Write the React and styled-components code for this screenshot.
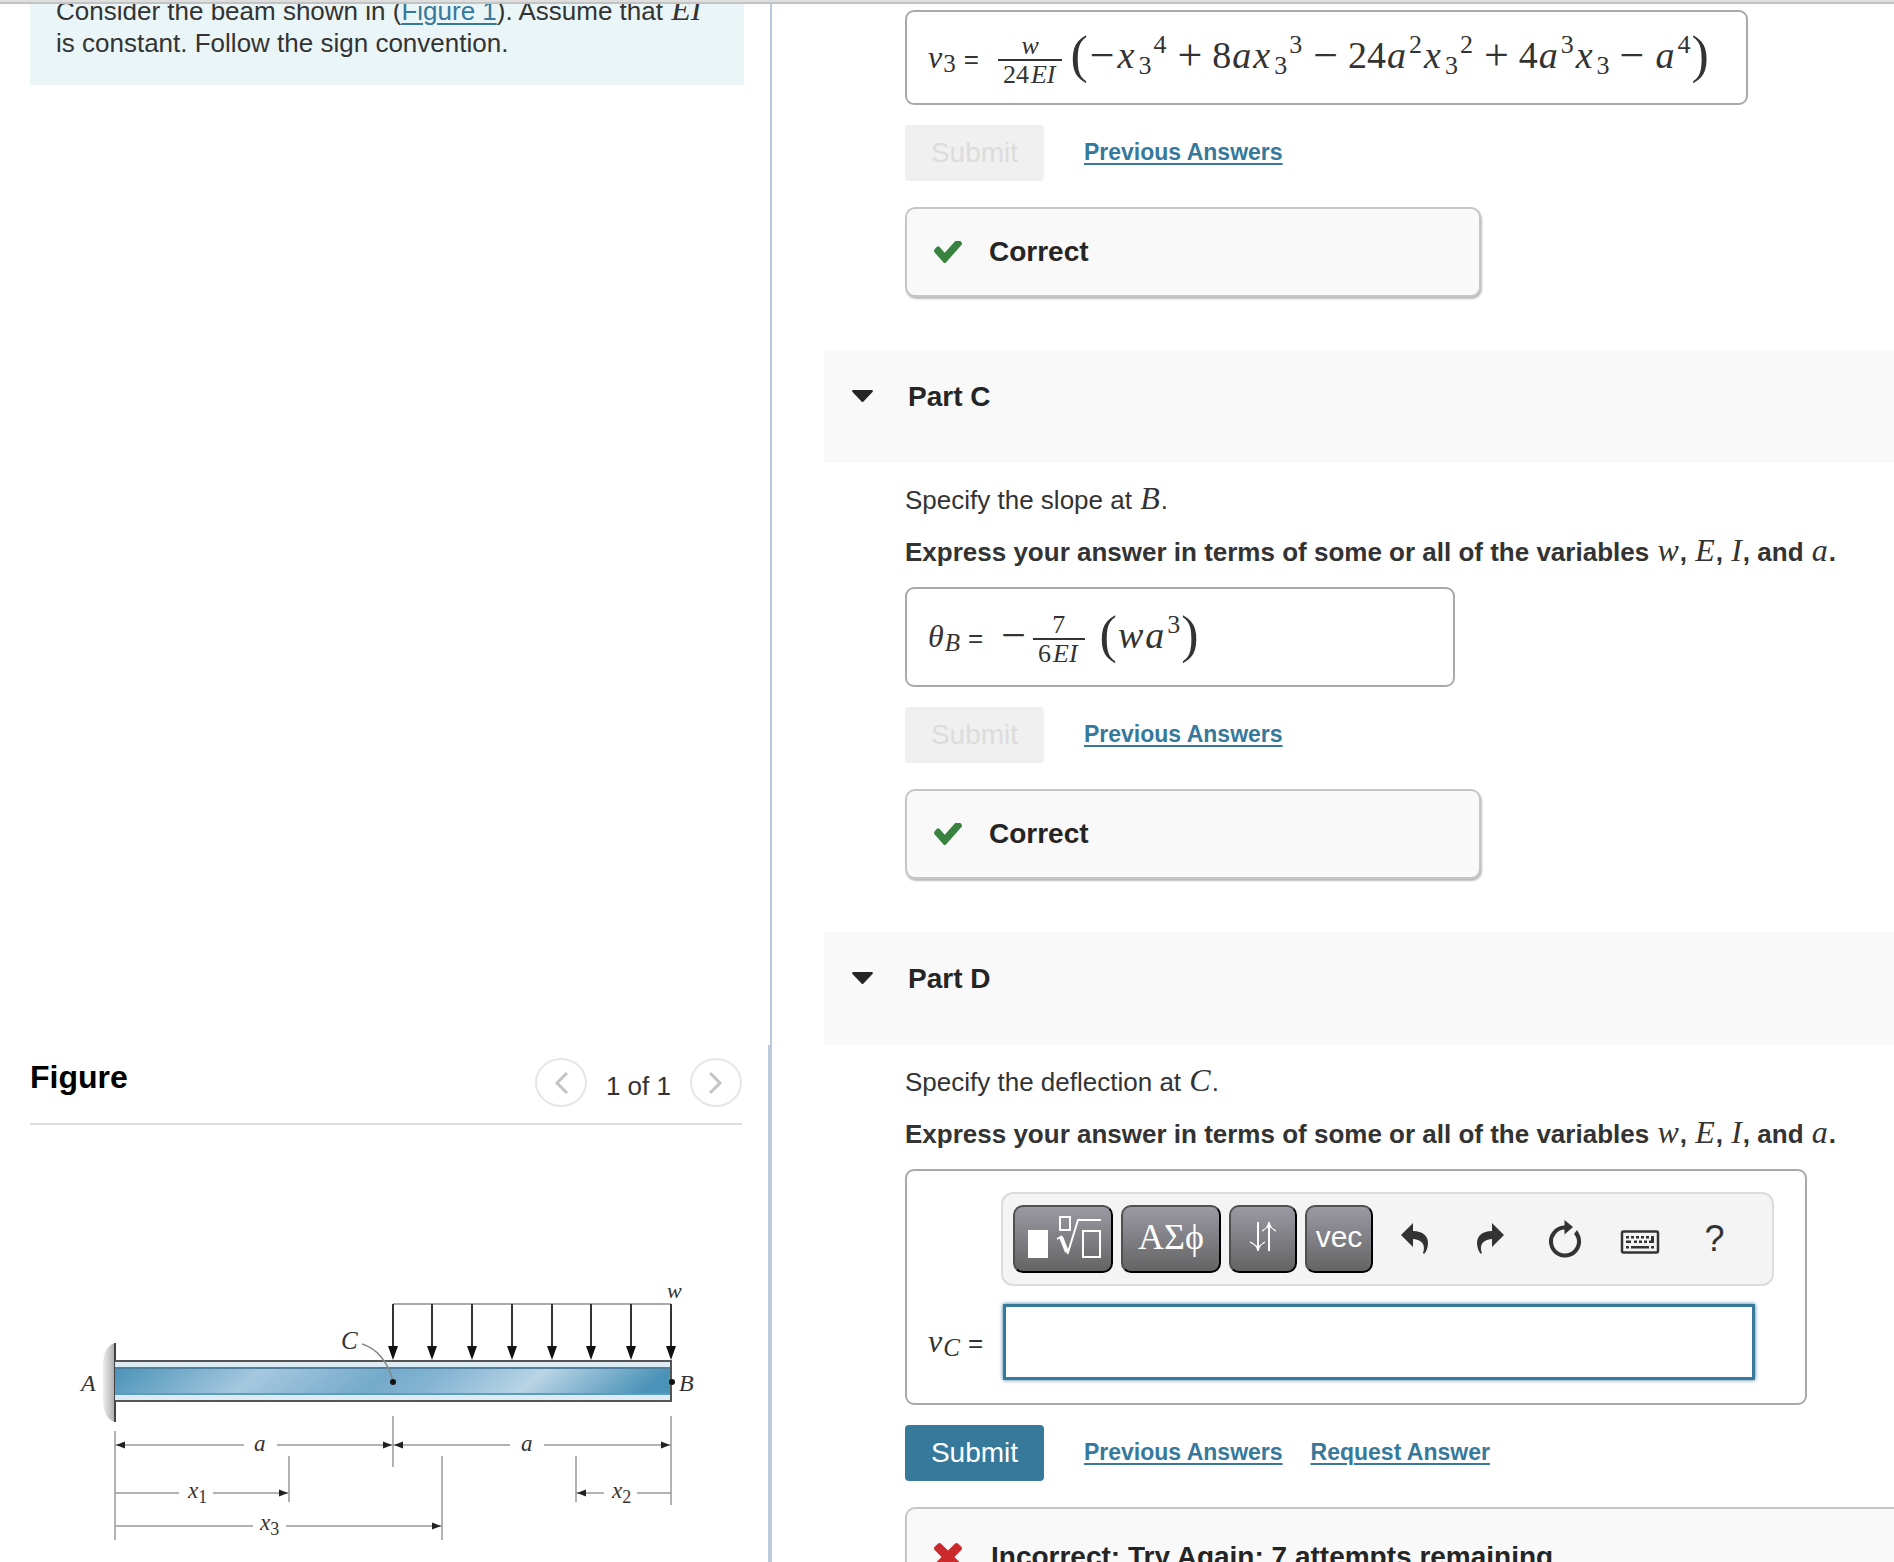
import React from "react";
import styled, { createGlobalStyle } from "styled-components";

const SANS = `"Liberation Sans", Arial, Helvetica, sans-serif`;
const SERIF = `"Liberation Serif", "Times New Roman", serif`;

const GlobalStyle = createGlobalStyle`
  * { box-sizing: border-box; }
  body {
    margin: 0;
    background: #fff;
    color: #333;
    font-family: ${SANS};
    font-size: 26px;
    line-height: 32px;
  }
  h2, h3, p { margin: 0; }
`;

const Page = styled.div`
  display: flex;
  flex-direction: column;
  height: 100vh;
  overflow: hidden;
`;

const TopBar = styled.div`
  flex: none;
  height: 4px;
  background: #dedede;
  border-bottom: 2px solid #c3c3c3;
`;

const Columns = styled.div`
  flex: 1;
  min-height: 0;
  display: grid;
  grid-template-columns: minmax(0, 772fr) minmax(0, 1122fr);
  overflow: hidden;
`;

const Left = styled.div`
  display: flex;
  flex-direction: column;
  min-height: 0;
`;

const PromptPane = styled.section`
  flex: 1;
  min-height: 0;
  overflow: hidden;
  padding: 0 26px 0 30px;
  border-right: 2px solid #bac9db;
`;

const Prompt = styled.div`
  margin-top: -35px;
  padding: 26px;
  background: #eaf5f7;
`;

const TextLink = styled.a`
  color: #36799b;
  text-decoration: underline;
  text-decoration-thickness: 2px;
  text-underline-offset: 3px;
`;

const FigurePane = styled.section`
  padding: 0 26px 0 30px;
  border-right: 4px solid #bac9db;
`;

const FigureHead = styled.header`
  display: flex;
  justify-content: space-between;
  align-items: flex-start;
  padding: 13px 0 16px;
  border-bottom: 2px solid #dcdcdc;
`;

const FigureTitle = styled.h2`
  color: #000;
  font-size: 32px;
  line-height: 38px;
`;

const Pager = styled.nav`
  display: flex;
  align-items: center;
  gap: 19px;
`;

const PagerLabel = styled.span`
  padding-top: 6px;
`;

const RoundButton = styled.button`
  display: flex;
  align-items: center;
  justify-content: center;
  width: 52px;
  height: 49px;
  padding: 0;
  border: 2px solid #e6e6e6;
  border-radius: 50%;
  background: #fff;
`;

const Drawing = styled.svg`
  display: block;
  width: 100%;
  height: auto;
  text {
    font-family: ${SERIF};
    font-style: italic;
    fill: #333;
  }
`;

const Right = styled.main`
  min-height: 0;
  overflow: hidden;
  padding: 6px 0 0 52px;
`;

const PartBody = styled.section`
  padding-left: 81px;
`;

const PartHead = styled.header`
  display: flex;
  align-items: center;
  gap: 35px;
  margin-top: 53px;
  padding: 29px 28px 48px;
  background: #f9f9f9;
`;

const PartTitle = styled.h3`
  color: #252525;
  font-size: 28px;
  line-height: 36px;
`;

const Question = styled.p`
  padding-top: 21px;
`;

const Instruction = styled.p`
  padding: 20px 0 19px;
  font-weight: bold;
`;

const V = styled.i`
  margin: 0 1px;
  font-family: ${SERIF};
  font-size: 32px;
  font-style: italic;
  font-weight: normal;
  line-height: 24px;
`;

const AnswerBox = styled.div`
  display: flex;
  align-items: center;
  width: ${(p) => p.$width}px;
  height: ${(p) => p.$height}px;
  max-width: 100%;
  padding: 0 21px;
  border: 2px solid #a9a9a9;
  border-radius: 9px;
  white-space: nowrap;
`;

const MathLabel = styled.label`
  font-size: 26px;
  line-height: 40px;
  i {
    font-family: ${SERIF};
    font-size: 32px;
  }
  sub {
    margin: 0 8px 0 1px;
    font-family: ${SERIF};
    font-size: 25px;
    line-height: 0;
    vertical-align: -4px;
  }
`;

const Formula = styled.output`
  padding-left: ${(p) => p.$indent}px;
  font-family: ${SERIF};
  font-size: 38px;
  line-height: 56px;
  i {
    margin: 0 1px;
  }
`;

const Sub = styled.sub`
  margin-left: 3px;
  font-size: 26px;
  line-height: 0;
  vertical-align: -6px;
`;

const Sup = styled.sup`
  margin: 0 1px 0 2px;
  font-size: 26px;
  line-height: 0;
  vertical-align: 15px;
`;

const Op = styled.span`
  margin: 0 ${(p) => (p.$unary ? 2 : 10)}px;
  font-size: 44px;
  line-height: 0;
  vertical-align: -2px;
`;

const Paren = styled.span`
  font-size: 52px;
  line-height: 0;
  vertical-align: -4px;
`;

const Fraction = styled.span`
  display: inline-flex;
  flex-direction: column;
  margin: 0 ${(p) => p.$after}px 0 ${(p) => p.$before || 0}px;
  font-size: 26px;
  line-height: 27px;
  text-align: center;
  vertical-align: middle;
`;

const Denominator = styled.span`
  padding: 0 5px;
  border-top: 2px solid #333;
  i {
    margin: 0 2px;
  }
`;

const Actions = styled.div`
  display: flex;
  align-items: center;
  gap: 28px;
  padding: 20px 0 26px;
`;

const SubmitButton = styled.button`
  width: 139px;
  height: 56px;
  margin-right: 12px;
  padding: 0;
  border: 0;
  border-radius: 4px;
  background: #36799b;
  color: #fff;
  font-family: ${SANS};
  font-size: 28px;
  &:disabled {
    background: #f0f0f0;
    color: #dcdcdc;
  }
`;

const ActionLink = styled(TextLink)`
  padding-bottom: 3px;
  font-size: 23px;
  font-weight: bold;
`;

const Feedback = styled.div`
  display: flex;
  align-items: center;
  gap: 27px;
  width: 576px;
  height: 90px;
  padding: 0 27px;
  border: 2px solid #c6c6c6;
  border-radius: 10px;
  background: #f9f9f9;
  box-shadow: 1px 2px 2px #bbb;
  color: #252525;
  font-size: 28px;
  font-weight: bold;
`;

const WrongFeedback = styled(Feedback)`
  gap: 29px;
  width: 100%;
  height: 100px;
  border-right: 0;
  border-top-right-radius: 0;
  border-bottom-right-radius: 0;
`;

const Mark = styled.svg`
  flex: none;
  width: 28px;
  height: ${(p) => p.$height}px;
`;

const Editor = styled.div`
  display: grid;
  grid-template-columns: 73px minmax(0, 1fr);
  row-gap: 18px;
  align-items: center;
  width: 902px;
  max-width: 100%;
  padding: 21px 31px 23px 21px;
  border: 2px solid #a9a9a9;
  border-radius: 9px;
`;

const Toolbar = styled.div`
  grid-column: 2;
  display: flex;
  align-items: center;
  gap: 8px;
  padding: 11px 10px;
  border: 2px solid #dcdcdc;
  border-radius: 12px;
  background: #f4f4f4;
`;

const PaletteButton = styled.button`
  display: flex;
  align-items: center;
  justify-content: center;
  width: ${(p) => (p.$wide ? 100 : 68)}px;
  height: 68px;
  padding: 0 0 4px;
  border: 2px solid;
  border-color: #505050 #000 #000 #505050;
  border-radius: 10px;
  background: linear-gradient(#9b99a3, #646464);
  color: #fff;
  font-family: ${(p) => (p.$serif ? SERIF : SANS)};
  font-size: ${(p) => (p.$serif ? 36 : 30)}px;
`;

const IconRow = styled.div`
  display: flex;
  margin-left: -4px;
`;

const IconButton = styled.button`
  display: flex;
  align-items: center;
  justify-content: center;
  width: 75px;
  height: 68px;
  padding: 0;
  border: 0;
  background: none;
  color: #333;
  font-family: ${SANS};
  font-size: 36px;
  line-height: 36px;
`;

const EntryInput = styled.input`
  height: 76px;
  margin: 0 19px 0 2px;
  padding: 0 16px;
  border: 3px solid #36799b;
  outline: none;
  box-shadow: 0 0 4px #36799b;
  background: #fff;
  color: #333;
  font-family: ${SERIF};
  font-size: 38px;
`;

const CHECK =
  "M1671 566q0 40-28 68l-724 724-136 136q-28 28-68 28t-68-28l-136-136-362-362q-28-28-28-68t28-68l136-136q28-28 68-28t68 28l294 295 656-657q28-28 68-28t68 28l136 136q28 28 28 68z";
const CROSS =
  "M1490 1322q0 40-28 68l-136 136q-28 28-68 28t-68-28l-294-294-294 294q-28 28-68 28t-68-28l-136-136q-28-28-28-68t28-68l294-294-294-294q-28-28-28-68t28-68l136-136q28-28 68-28t68 28l294 294 294-294q28-28 68-28t68 28l136 136q28 28 28 68t-28 68l-294 294 294 294q28 28 28 68z";

function Correct() {
  return (
    <Feedback role="status">
      <Mark $height={22} viewBox="121 434 1550 1088" preserveAspectRatio="none" aria-hidden="true">
        <path fill="#37833f" d={CHECK} />
      </Mark>
      Correct
    </Feedback>
  );
}

function Caret() {
  return (
    <svg width="21" height="14" viewBox="0 0 21 14" aria-hidden="true">
      <path d="M1 0H20Q21.500 .5 20.500 2L11.500 11.500Q10.500 12.500 9.500 11.500L.5 2Q-.5 .5 1 0Z" fill="#252525" />
    </svg>
  );
}

function PartHeader({ children }) {
  return (
    <PartHead>
      <Caret />
      <PartTitle>{children}</PartTitle>
    </PartHead>
  );
}

function Variables() {
  return (
    <Instruction>
      Express your answer in terms of some or all of the variables <V>w</V>, <V>E</V>, <V>I</V>, and <V>a</V>.
    </Instruction>
  );
}

function Chevron({ d }) {
  return (
    <svg width="14" height="24" viewBox="0 0 14 24" fill="none" stroke="#c4c4c4" strokeWidth="3" aria-hidden="true">
      <path d={d} />
    </svg>
  );
}

/* Solid arrow head with its tip at (x, y), pointing along dir. */
function Head({ x, y, dir }) {
  const s = dir === "left" ? 1 : -1;
  return <path d={`M${x} ${y}l${9 * s} -3.500v7z`} fill="#222" />;
}

const LOADS = [363, 402, 442, 482, 522, 561, 601, 641];

function BeamFigure() {
  return (
    <Drawing viewBox="0 0 712 437" role="img" aria-label="Cantilever beam A B with a distributed load w from C to B">
      <defs>
        <linearGradient id="web" x1="0" x2="1" y1="0" y2="0.06">
          <stop offset="0" stopColor="#4a92b8" />
          <stop offset="0.27" stopColor="#a5c8de" />
          <stop offset="0.5" stopColor="#74aaca" />
          <stop offset="0.6" stopColor="#84b4d2" />
          <stop offset="0.78" stopColor="#b9d4e5" />
          <stop offset="1" stopColor="#4a92b8" />
        </linearGradient>
        <linearGradient id="wall" x1="0" x2="1" y1="0" y2="0">
          <stop offset="0" stopColor="#eee" />
          <stop offset="1" stopColor="#aaa" />
        </linearGradient>
      </defs>

      <path d="M85 218Q73 222 73 240V276Q74 294 85 297Z" fill="url(#wall)" />
      <path d="M85 218V297" stroke="#444" strokeWidth="2" />

      <rect x="85" y="236" width="556" height="40" fill="#dcebf4" />
      <rect x="85" y="242" width="556" height="28" fill="url(#web)" />
      <path d="M85 243H641" stroke="#4f7f9c" strokeWidth="2" />
      <path d="M85 269H641" stroke="#5b9dc0" strokeWidth="2" />
      <path d="M85 236H641V276H85" fill="none" stroke="#555" strokeWidth="2" />

      <path d="M363 179H641" stroke="#aaa" strokeWidth="2" />
      {LOADS.map((x) => (
        <g key={x}>
          <path d={`M${x} 179V224`} stroke="#333" strokeWidth="2" />
          <path d={`M${x - 5} 221h10l-5 14z`} fill="#111" />
        </g>
      ))}

      <path d="M332 219C348 224 358 238 363 256" fill="none" stroke="#888" strokeWidth="1.500" />
      <circle cx="363" cy="257" r="3" fill="#111" />
      <circle cx="642" cy="257" r="3" fill="#111" />

      <g stroke="#999" strokeWidth="1.500">
        <path d="M85 306V415M363 291V342M641 291V380" />
        <path d="M259 331V377M412 331V415M546 331V377" />
        <path d="M85 320H214M247 320H480M514 320H641" />
        <path d="M85 368H149M183 368H259M546 368H574M607 368H641" />
        <path d="M85 401H223M256 401H412" />
      </g>
      <Head x={86} y={320} dir="left" />
      <Head x={362} y={320} dir="right" />
      <Head x={364} y={320} dir="left" />
      <Head x={640} y={320} dir="right" />
      <Head x={258} y={368} dir="right" />
      <Head x={547} y={368} dir="left" />
      <Head x={411} y={401} dir="right" />

      <text x="637" y="173" fontSize="22">w</text>
      <text x="311" y="224" fontSize="25">C</text>
      <text x="51" y="266" fontSize="24">A</text>
      <text x="649" y="266" fontSize="24">B</text>
      <text x="224" y="326" fontSize="23">a</text>
      <text x="491" y="326" fontSize="23">a</text>
      <text x="158" y="373" fontSize="23">x<tspan dy="5" fontSize="18" fontStyle="normal">1</tspan></text>
      <text x="582" y="373" fontSize="23">x<tspan dy="5" fontSize="18" fontStyle="normal">2</tspan></text>
      <text x="230" y="405" fontSize="23">x<tspan dy="5" fontSize="18" fontStyle="normal">3</tspan></text>
    </Drawing>
  );
}

function RootIcon() {
  return (
    <svg width="76" height="44" viewBox="-2 0 76 44" fill="none" stroke="#fff" aria-hidden="true">
      <rect x="1" y="15" width="20" height="28" fill="#fff" stroke="none" />
      <rect x="33" y="2" width="10" height="13" strokeWidth="2" />
      <rect x="56" y="16" width="17" height="26" strokeWidth="2" />
      <path d="M30 24L35 21" strokeWidth="1.500" />
      <path d="M34 22L40 37" strokeWidth="4" />
      <path d="M40.500 39L51 5H74" strokeWidth="2" />
    </svg>
  );
}

function UpDownIcon() {
  return (
    <svg width="28" height="32" viewBox="0 0 28 32" fill="none" stroke="#fff" aria-hidden="true">
      <path d="M9 1V27M20 5V30" strokeWidth="2" />
      <path d="M1 21Q7 23 9 30Q11 23 16 21L9 26Z" fill="#fff" strokeWidth="1" />
      <path d="M13 10Q18 8 20 1Q22 8 27 10L20 5Z" fill="#fff" strokeWidth="1" />
    </svg>
  );
}

function BendArrow({ flip }) {
  return (
    <svg width="28" height="32" viewBox="0 0 28 32" fill="#333" aria-hidden="true">
      <path
        transform={flip ? "translate(28 0) scale(-1 1)" : undefined}
        d="M12 0V8C22 8 27 13 27 20C27 25 25 29 23 31L22 30C24 25 24 17 12 16V24L0 12Z"
      />
    </svg>
  );
}

function ResetIcon() {
  return (
    <svg width="34" height="38" viewBox="0 0 34 38" aria-hidden="true">
      <path d="M17 7.500A14 14 0 1 0 28.500 13.500" fill="none" stroke="#333" strokeWidth="4" />
      <path d="M16.500 0L25 7L16.500 14.500Z" fill="#333" />
      <path d="M26 14L29 10L31.500 15L28 16Z" fill="#333" />
    </svg>
  );
}

function KeyboardIcon() {
  return (
    <svg width="40" height="30" viewBox="0 -6 40 30" fill="#333" aria-hidden="true">
      <rect x="2" y="1.500" width="36" height="21" rx="1.500" fill="none" stroke="#333" strokeWidth="2.500" />
      {[6, 11, 16, 21, 26].map((x) => (
        <rect key={x} x={x} y="6" width="3" height="2.500" />
      ))}
      <path d="M31 6h3v7h-5v-2.500h2z" />
      <rect x="6" y="10.500" width="5" height="2.500" />
      {[14, 19, 24].map((x) => (
        <rect key={x} x={x} y="10.500" width="3" height="2.500" />
      ))}
      <rect x="6" y="16" width="3" height="2.500" />
      <rect x="11" y="16" width="18" height="2.500" />
      <rect x="31" y="16" width="3" height="2.500" />
    </svg>
  );
}

export default function App() {
  return (
    <>
      <GlobalStyle />
      <Page>
        <TopBar />
        <Columns>
          <Left>
            <PromptPane>
              <Prompt>
                Consider the beam shown in (<TextLink href="#figure">Figure 1</TextLink>). Assume that <V>EI</V> is
                constant. Follow the sign convention.
              </Prompt>
            </PromptPane>
            <FigurePane id="figure">
              <FigureHead>
                <FigureTitle>Figure</FigureTitle>
                <Pager aria-label="Figures">
                  <RoundButton type="button" aria-label="Previous figure">
                    <Chevron d="M13 2L3 12L13 22" />
                  </RoundButton>
                  <PagerLabel>1 of 1</PagerLabel>
                  <RoundButton type="button" aria-label="Next figure">
                    <Chevron d="M1 2L11 12L1 22" />
                  </RoundButton>
                </Pager>
              </FigureHead>
              <BeamFigure />
            </FigurePane>
          </Left>

          <Right>
            <PartBody>
              <AnswerBox $width={843} $height={95}>
                <MathLabel htmlFor="answer-v3">
                  <i>v</i>
                  <sub>3</sub>=
                </MathLabel>
                <Formula id="answer-v3" $indent={19}>
                  <Fraction $after={8}>
                    <i>w</i>
                    <Denominator>
                      24<i>EI</i>
                    </Denominator>
                  </Fraction>
                  <Paren>(</Paren>
                  <Op $unary>−</Op>
                  <i>x</i>
                  <Sub>3</Sub>
                  <Sup>4</Sup>
                  <Op>+</Op>8<i>a</i>
                  <i>x</i>
                  <Sub>3</Sub>
                  <Sup>3</Sup>
                  <Op>−</Op>24<i>a</i>
                  <Sup>2</Sup>
                  <i>x</i>
                  <Sub>3</Sub>
                  <Sup>2</Sup>
                  <Op>+</Op>4<i>a</i>
                  <Sup>3</Sup>
                  <i>x</i>
                  <Sub>3</Sub>
                  <Op>−</Op>
                  <i>a</i>
                  <Sup>4</Sup>
                  <Paren>)</Paren>
                </Formula>
              </AnswerBox>
              <Actions>
                <SubmitButton type="button" disabled>
                  Submit
                </SubmitButton>
                <ActionLink href="#previous">Previous Answers</ActionLink>
              </Actions>
              <Correct />
            </PartBody>

            <PartHeader>Part C</PartHeader>
            <PartBody>
              <Question>
                Specify the slope at <V>B</V>.
              </Question>
              <Variables />
              <AnswerBox $width={550} $height={100}>
                <MathLabel htmlFor="answer-theta">
                  <i>θ</i>
                  <sub>
                    <em>B</em>
                  </sub>
                  =
                </MathLabel>
                <Formula id="answer-theta" $indent={16}>
                  <Op $unary>−</Op>
                  <Fraction $before={5} $after={15}>
                    <span>7</span>
                    <Denominator>
                      6<i>EI</i>
                    </Denominator>
                  </Fraction>
                  <Paren>(</Paren>
                  <i>w</i>
                  <i>a</i>
                  <Sup>3</Sup>
                  <Paren>)</Paren>
                </Formula>
              </AnswerBox>
              <Actions>
                <SubmitButton type="button" disabled>
                  Submit
                </SubmitButton>
                <ActionLink href="#previous">Previous Answers</ActionLink>
              </Actions>
              <Correct />
            </PartBody>

            <PartHeader>Part D</PartHeader>
            <PartBody>
              <Question>
                Specify the deflection at <V>C</V>.
              </Question>
              <Variables />
              <Editor>
                <Toolbar role="toolbar" aria-label="Equation tools">
                  <PaletteButton type="button" $wide aria-label="Templates">
                    <RootIcon />
                  </PaletteButton>
                  <PaletteButton type="button" $wide $serif>
                    ΑΣϕ
                  </PaletteButton>
                  <PaletteButton type="button" aria-label="Arrows">
                    <UpDownIcon />
                  </PaletteButton>
                  <PaletteButton type="button">vec</PaletteButton>
                  <IconRow>
                    <IconButton type="button" aria-label="Undo">
                      <BendArrow />
                    </IconButton>
                    <IconButton type="button" aria-label="Redo">
                      <BendArrow flip />
                    </IconButton>
                    <IconButton type="button" aria-label="Reset">
                      <ResetIcon />
                    </IconButton>
                    <IconButton type="button" aria-label="Keyboard shortcuts">
                      <KeyboardIcon />
                    </IconButton>
                    <IconButton type="button">?</IconButton>
                  </IconRow>
                </Toolbar>
                <MathLabel htmlFor="answer-vc">
                  <i>v</i>
                  <sub>
                    <em>C</em>
                  </sub>
                  =
                </MathLabel>
                <EntryInput id="answer-vc" type="text" />
              </Editor>
              <Actions>
                <SubmitButton type="button">Submit</SubmitButton>
                <ActionLink href="#previous">Previous Answers</ActionLink>
                <ActionLink href="#request">Request Answer</ActionLink>
              </Actions>
              <WrongFeedback role="status">
                <Mark $height={28} viewBox="302 366 1188 1188" aria-hidden="true">
                  <path fill="#cb2a2d" d={CROSS} />
                </Mark>
                Incorrect; Try Again; 7 attempts remaining
              </WrongFeedback>
            </PartBody>
          </Right>
        </Columns>
      </Page>
    </>
  );
}
